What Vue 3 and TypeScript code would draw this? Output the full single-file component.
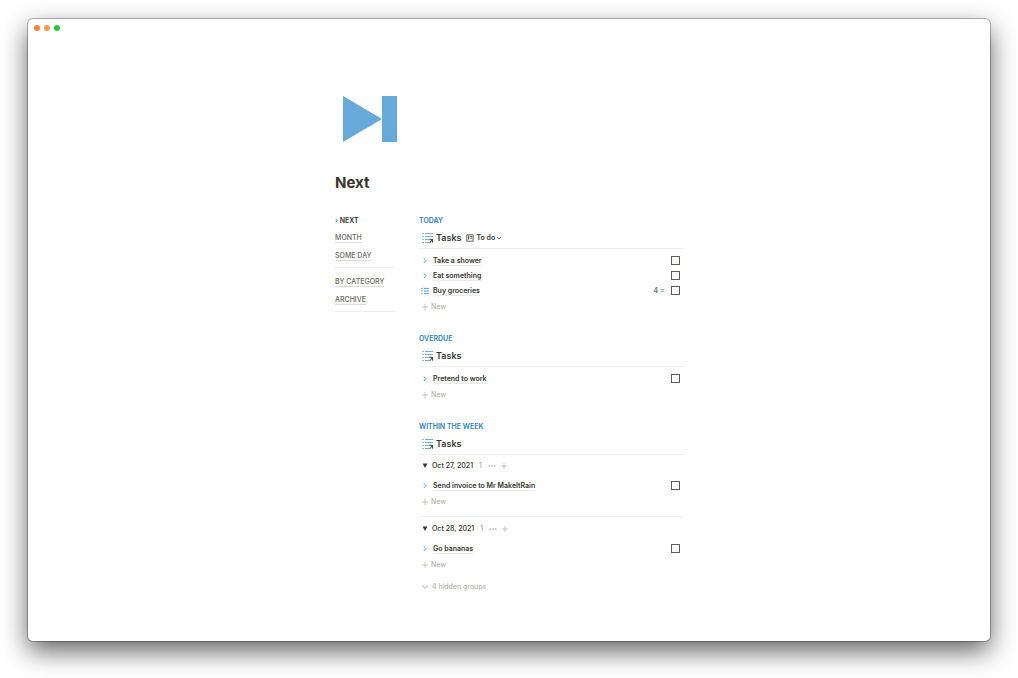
<script setup lang="ts">
import { reactive } from 'vue'

interface Task {
  id: string
  title: string
  icon: 'chevron' | 'list'
  done: boolean
  note?: string
}

interface Group {
  label?: string
  tasks: Task[]
}

interface Section {
  title: string
  view?: string
  hidden?: string
  groups: Group[]
}

const navMain: string[] = ['MONTH', 'SOME DAY']
const navMore: string[] = ['BY CATEGORY', 'ARCHIVE']

const sections = reactive<Section[]>([
  {
    title: 'TODAY',
    view: 'To do',
    groups: [
      {
        tasks: [
          { id: 'shower', title: 'Take a shower', icon: 'chevron', done: false },
          { id: 'eat', title: 'Eat something', icon: 'chevron', done: false },
          { id: 'groceries', title: 'Buy groceries', icon: 'list', done: false, note: '4 ≡' },
        ],
      },
    ],
  },
  {
    title: 'OVERDUE',
    groups: [{ tasks: [{ id: 'work', title: 'Pretend to work', icon: 'chevron', done: false }] }],
  },
  {
    title: 'WITHIN THE WEEK',
    hidden: '4 hidden groups',
    groups: [
      {
        label: 'Oct 27, 2021',
        tasks: [{ id: 'invoice', title: 'Send invoice to Mr MakeItRain', icon: 'chevron', done: false }],
      },
      {
        label: 'Oct 28, 2021',
        tasks: [{ id: 'bananas', title: 'Go bananas', icon: 'chevron', done: false }],
      },
    ],
  },
])
</script>

<template>
  <div class="desktop">
    <div class="window">
      <div class="lights">
        <span class="light close"></span>
        <span class="light minimise"></span>
        <span class="light expand"></span>
      </div>

      <div class="page">
        <svg class="cover-icon" viewBox="0 0 54 46" aria-hidden="true">
          <path d="M0 0L39 23L0 46Z" />
          <path d="M39 0H54V46H39Z" />
        </svg>
        <h1>Next</h1>

        <div class="columns">
          <nav class="side">
            <p class="current"><span class="mark">›</span> NEXT</p>
            <a v-for="item in navMain" :key="item" href="#"><span>{{ item }}</span></a>
            <hr />
            <a v-for="item in navMore" :key="item" href="#"><span>{{ item }}</span></a>
            <hr />
          </nav>

          <main>
            <section v-for="section in sections" :key="section.title">
              <h2>{{ section.title }}</h2>
              <div class="bar">
                <svg class="db-icon" viewBox="0 0 12 12" aria-hidden="true">
                  <path class="blue" d="M.2 1.5H1.8M.2 4.5H1.8M.2 7.5H1.8M.2 10.5H1.8M3 1.5H11M3 4.5H11M3 7.5H7.4M3 10.5H7" />
                  <path class="dark" d="M7.6 11L10.4 7.6M7.4 7.3H10.6V10.6" />
                </svg>
                <h3>Tasks</h3>
                <button v-if="section.view" class="view" type="button">
                  <svg class="view-icon" viewBox="0 0 8 8" aria-hidden="true">
                    <path d="M.8.8H7.2V7.2H.8ZM2.5 1.6V5.6M3.7 2.5H6.2M3.7 4.2H6.2" />
                  </svg>
                  {{ section.view }}
                  <svg class="caret" viewBox="0 0 6 6" aria-hidden="true"><path d="M1 2L3 4L5 2" /></svg>
                </button>
              </div>

              <div v-for="(group, gi) in section.groups" :key="gi" class="group">
                <div v-if="group.label" class="group-head">
                  <svg class="toggle" viewBox="0 0 6 6" aria-hidden="true"><path d="M.6.5H5.4L3 5Z" /></svg>
                  <span>{{ group.label }}</span>
                  <span class="count">{{ group.tasks.length }}</span>
                  <button type="button" aria-label="More">
                    <svg class="dots" viewBox="0 0 8 6" aria-hidden="true">
                      <circle cx="1.2" cy="3" r=".8" /><circle cx="4" cy="3" r=".8" /><circle cx="6.8" cy="3" r=".8" />
                    </svg>
                  </button>
                  <button type="button" aria-label="Add">
                    <svg class="plus" viewBox="0 0 6 6" aria-hidden="true"><path d="M3 0V6M0 3H6" /></svg>
                  </button>
                </div>

                <div v-for="task in group.tasks" :key="task.id" class="task">
                  <svg v-if="task.icon === 'chevron'" class="task-icon" viewBox="0 0 8 8" aria-hidden="true">
                    <path d="M2.8 1.4L5 3.7L2.8 6" />
                  </svg>
                  <svg v-else class="task-icon" viewBox="0 0 8 8" aria-hidden="true">
                    <path d="M0 1.4L.7 2L1.8.6M0 4H1.5M0 6.7H1.5M2.8 1.4H8M2.8 4H8M2.8 6.7H8" />
                  </svg>
                  <label :for="task.id"><span>{{ task.title }}</span></label>
                  <span v-if="task.note" class="note">{{ task.note }}</span>
                  <input :id="task.id" v-model="task.done" type="checkbox" />
                </div>

                <button class="new" type="button">
                  <svg class="plus" viewBox="0 0 6 6" aria-hidden="true"><path d="M3 0V6M0 3H6" /></svg>
                  New
                </button>
              </div>

              <button v-if="section.hidden" class="hidden-groups" type="button">
                <svg class="more" viewBox="0 0 6 6" aria-hidden="true"><path d="M0 1.4L3 4.2L6 1.4" /></svg>
                {{ section.hidden }}
              </button>
            </section>
          </main>
        </div>
      </div>
    </div>
  </div>
</template>

<style>
body {
  margin: 0;
  background: #fff;
}
</style>

<style scoped>
.desktop {
  box-sizing: border-box;
  min-height: 100vh;
  padding: 19px 28px 37px;
  display: flex;
  font-family: Inter, "Liberation Sans", sans-serif;
  font-size: 7px;
  line-height: 12px;
  color: #37352f;
  overflow: hidden;
}

.window {
  flex: 1;
  box-sizing: border-box;
  background: #fff;
  border-radius: 5px;
  box-shadow: 0 0 0 1px rgba(0, 0, 0, 0.26), 0 10px 26px rgba(0, 0, 0, 0.62);
}

.lights {
  display: flex;
  gap: 4px;
  padding: 6px 6px 0;
}

.light {
  width: 6px;
  height: 6px;
  border-radius: 50%;
}

.close { background: #ff8045; }
.minimise { background: #fc9a50; }
.expand { background: #27c840; }

.page {
  max-width: 350px;
  margin: 0 auto;
  padding: 65px 0 40px;
}

.cover-icon {
  display: block;
  width: 54px;
  height: 46px;
  margin-left: 9px;
  fill: #67a9d9;
}

h1 {
  margin: 30px 0 0 1px;
  font-size: 15px;
  line-height: 22px;
  font-weight: 700;
}

h2,
h3,
p {
  margin: 0;
}

.columns {
  display: grid;
  grid-template-columns: 61px 1fr;
  column-gap: 24px;
  margin-top: 21px;
}

.side {
  display: flex;
  flex-direction: column;
  padding-left: 1px;
}

.current {
  font-weight: 600;
  margin-bottom: 5px;
}

.mark { color: #2e83bd; }

.side a {
  color: #6b6a66;
  font-weight: 500;
  text-decoration: none;
  margin-bottom: 6px;
}

.side a span { border-bottom: 1px solid #dddcda; }

.task label span { border-bottom: 1px solid #ecebea; }

hr {
  width: 100%;
  margin: -1px 0 8px;
  border: 0;
  border-top: 1px solid #ededec;
}

section + section { margin-top: 18px; }

h2 {
  font-size: 7px;
  line-height: 12px;
  font-weight: 600;
  color: #2e83bd;
}

.bar {
  display: flex;
  align-items: center;
  height: 21px;
  padding-left: 3px;
  border-bottom: 1px solid #ededec;
}

svg {
  flex: none;
  fill: none;
  stroke-width: 1;
}

.db-icon {
  width: 12px;
  height: 12px;
  margin-right: 2px;
}

.blue { stroke: #6fb0dc; }
.dark { stroke: #37352f; }

h3 {
  font-size: 9px;
  line-height: 12px;
  font-weight: 600;
}

button {
  display: flex;
  align-items: center;
  padding: 0;
  border: 0;
  background: none;
  font: inherit;
  color: inherit;
}

.view {
  margin-left: 5px;
  font-weight: 600;
}

.view-icon {
  width: 8px;
  height: 8px;
  margin-right: 2px;
  stroke: #5f5d58;
}

.caret {
  width: 6px;
  height: 6px;
  margin-left: 1px;
  stroke: #5f5d58;
}

.group { padding-top: 4px; }

.group + .group {
  margin-top: 6px;
  padding-top: 5px;
  border-top: 1px solid #ededec;
}

.group-head {
  display: flex;
  align-items: center;
  height: 14px;
  margin-bottom: 5px;
  padding-left: 3px;
  font-weight: 500;
}

.toggle {
  width: 6px;
  height: 6px;
  margin-right: 4px;
  fill: #37352f;
}

.count {
  margin: 0 6px;
  color: #9b9a97;
  font-weight: 400;
}

.dots {
  width: 8px;
  height: 6px;
  margin-right: 5px;
  fill: #9b9a97;
}

.plus {
  width: 6px;
  height: 6px;
  stroke: #c4c3c1;
}

.task {
  display: flex;
  align-items: center;
  height: 15px;
  padding: 0 4px 0 2px;
}

.task-icon {
  width: 8px;
  height: 8px;
  margin-right: 4px;
  stroke: #4fa3dc;
}

.task label {
  flex: 1;
  font-weight: 600;
}

.note {
  margin-right: 7px;
  color: #6b6a66;
  font-weight: 600;
}

input {
  appearance: none;
  box-sizing: border-box;
  width: 9px;
  height: 9px;
  margin: 0;
  border: 1px solid #5f5d58;
  background: #fff;
}

input:checked { background: #2e83bd; }

.new,
.hidden-groups {
  height: 17px;
  padding-left: 3px;
  color: #a9a8a5;
}

.new .plus { margin-right: 3px; }

.hidden-groups { margin-top: 5px; }

.more {
  width: 6px;
  height: 6px;
  margin-right: 4px;
  stroke: #a9a8a5;
}
</style>
